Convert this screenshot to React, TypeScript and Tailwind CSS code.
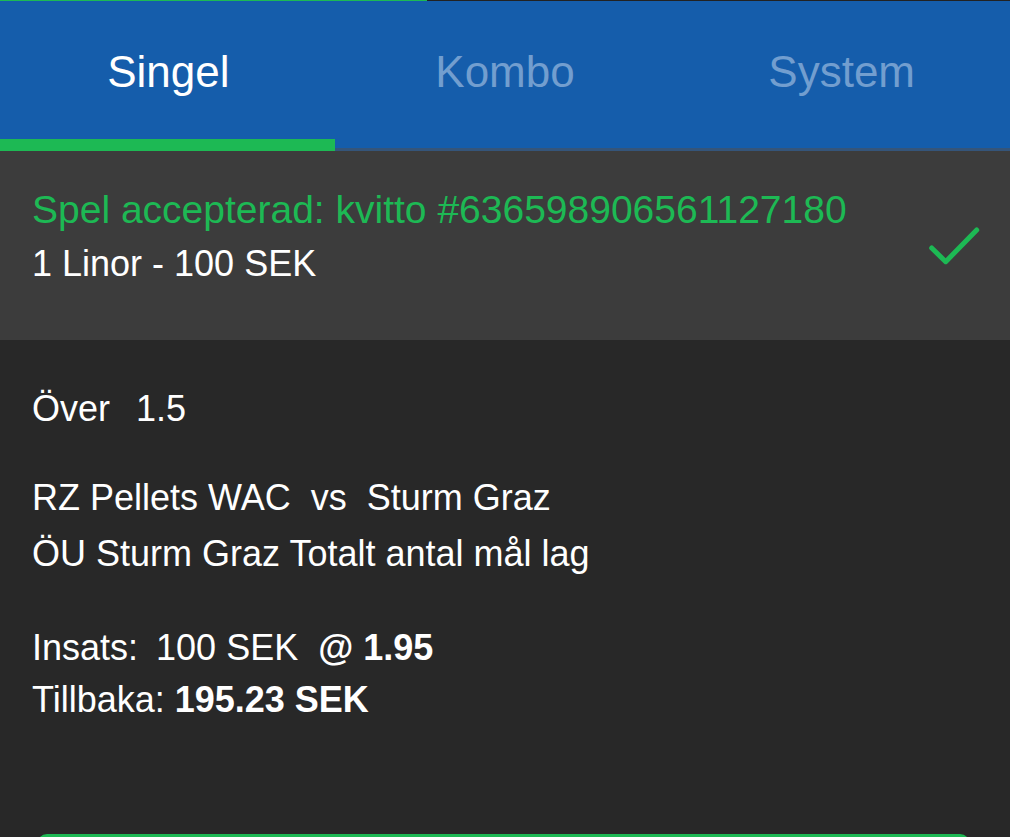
const tabs = ['Singel', 'Kombo', 'System'];

const CheckMark = () => (
  <svg width="56" height="40" viewBox="0 0 56 40" fill="none" className="mr-[28px] shrink-0">
    <path
      d="M5.7 22 L19.7 35.7 L50.7 4"
      stroke="#1db954"
      strokeWidth="5"
      strokeLinecap="round"
      strokeLinejoin="round"
    />
  </svg>
);

const BetSlipHeader = () => (
  <div className="relative">
    <div className="flex h-[147px] bg-[#155dab]">
      {tabs.map((tab, i) => (
        <div
          key={tab}
          className={
            i === 0
              ? 'flex-1 pt-[46px] text-center text-[44px] leading-[50px] text-white'
              : 'flex-1 pt-[46px] text-center text-[44px] leading-[50px] text-[#729ecf]'
          }
        >
          {tab}
        </div>
      ))}
    </div>
    <div className="h-[3px] bg-[#35557a]" />
    <div className="absolute bottom-0 left-0 h-[12px] w-[335px] bg-[#1db954]" />
  </div>
);

export default function App() {
  return (
    <div
      className="min-h-screen w-[1010px] bg-[#282828] text-white"
      style={{ fontFamily: '"Liberation Sans", Arial, sans-serif' }}
    >
      {/* progress line */}
      <div className="flex h-[1px]">
        <div className="w-[427px] bg-[#1db954]" />
        <div className="flex-1 bg-[#222222]" />
      </div>

      <BetSlipHeader />

      {/* receipt */}
      <div className="flex h-[189px] items-center justify-between bg-[#3c3c3c] pl-[32px]">
        <div className="-mt-[18px]">
          <p className="text-[39px] leading-[54px] text-[#1db954]">
            Spel accepterad: kvitto #636598906561127180
          </p>
          <p className="text-[36px] leading-[54px]">1 Linor - 100 SEK</p>
        </div>
        <CheckMark />
      </div>

      {/* bet details */}
      <div className="px-[32px] pt-[41px] text-[36px] leading-[56px]">
        <p>
          <span className="mr-[16px]">Över</span> 1.5
        </p>
        <div className="mt-[33px]">
          <p>RZ Pellets WAC&nbsp; vs&nbsp; Sturm Graz</p>
          <p>ÖU Sturm Graz Totalt antal mål lag</p>
        </div>
        <div className="mt-[40px] leading-[52px]">
          <p>
            Insats: <span className="ml-[8px]">100 SEK</span>&nbsp;{' '}
            <span className="font-bold">@ 1.95</span>
          </p>
          <p>
            Tillbaka: <span className="font-bold">195.23 SEK</span>
          </p>
        </div>
      </div>

      <div className="ml-[37px] mr-[40px] mt-[108px] h-[120px] rounded-[10px] bg-[#1db954]" />
    </div>
  );
}
